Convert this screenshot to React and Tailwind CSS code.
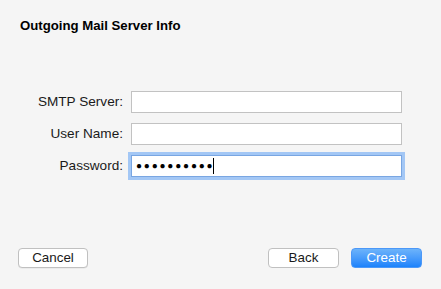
export default function App() {
  const font = { fontFamily: '"Liberation Sans", Arial, sans-serif' };

  return (
    <div
      className="w-[441px] h-[289px] bg-[#f5f5f5] flex flex-col text-[#1a1a1a] overflow-hidden"
      style={font}
    >
      <h1 className="pl-[20px] pt-[18px] text-[13.2px] leading-[16px] font-bold text-black">
        Outgoing Mail Server Info
      </h1>

      <div className="mt-[57px] pl-[20px] grid grid-cols-[103px_271px] gap-x-[8px] gap-y-[10px] items-center">
        <label className="text-right text-[13.6px] leading-[22px]">SMTP Server:</label>
        <div className="h-[22px] bg-white border border-[#c2c2c2]"></div>

        <label className="text-right text-[13.6px] leading-[22px]">User Name:</label>
        <div className="h-[22px] bg-white border border-[#c2c2c2]"></div>

        <label className="text-right text-[13.6px] leading-[22px]">Password:</label>
        <div className="h-[22px] bg-white border border-[#79a6e2] ring-[3px] ring-[#a3c7f5] flex items-center pl-[4px]">
          <span className="text-[10px] leading-none tracking-[1.8px] text-black">●●●●●●●●●●</span>
          <span className="w-px h-[16px] bg-black ml-[-1px]"></span>
        </div>
      </div>

      <div className="mt-auto pb-[21px] px-[18px] flex items-center">
        <button className="w-[70px] h-[20px] bg-white border border-[#c0c0c0] rounded-[4px] text-[13.4px] leading-none shadow-[0_0.5px_0.5px_rgba(0,0,0,0.08)]">
          Cancel
        </button>
        <div className="ml-auto flex gap-[12px] pr-[1px]">
          <button className="w-[71px] h-[20px] bg-white border border-[#c0c0c0] rounded-[4px] text-[13.4px] leading-none">
            Back
          </button>
          <button className="w-[71px] h-[20px] rounded-[4px] text-[13.4px] leading-none text-white bg-gradient-to-b from-[#6cb3fa] to-[#1a82fb] border border-[#4c98f8]">
            Create
          </button>
        </div>
      </div>
    </div>
  );
}
